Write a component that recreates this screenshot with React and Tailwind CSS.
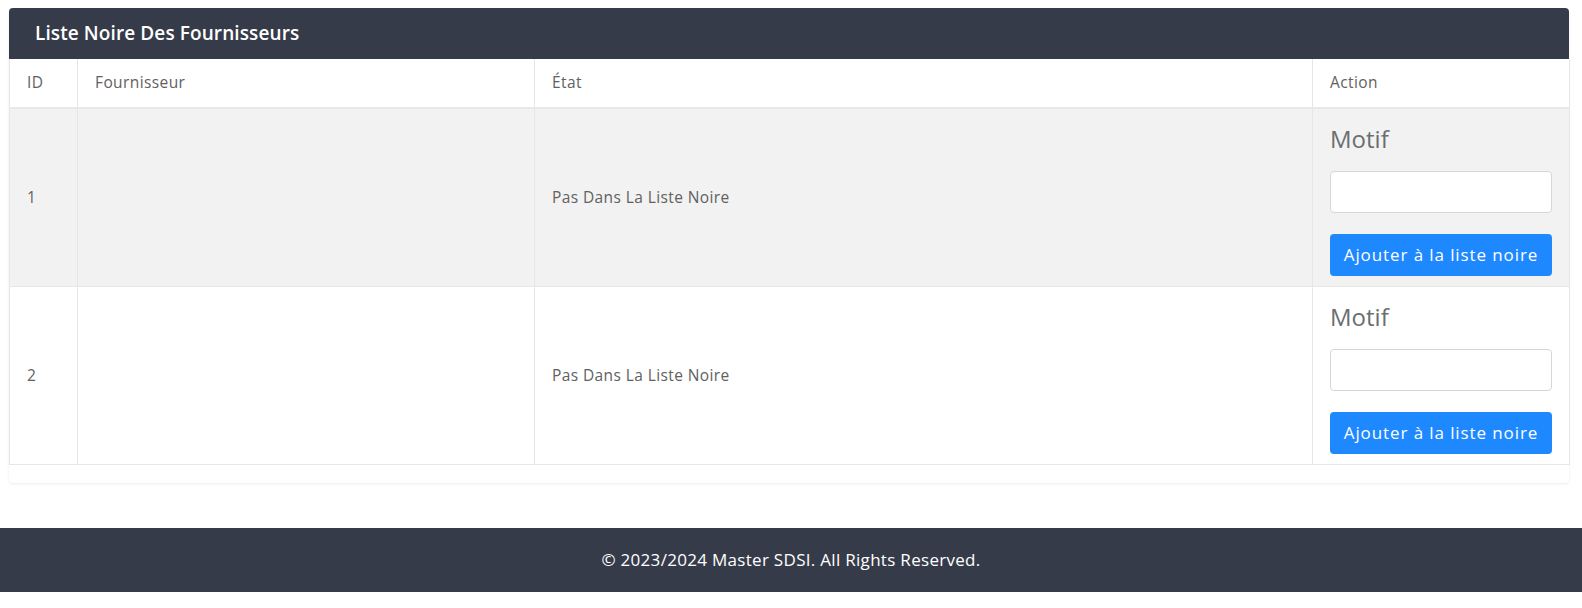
import React from "react";

const rows = [
  { id: 1, fournisseur: "", etat: "Pas Dans La Liste Noire", striped: true },
  { id: 2, fournisseur: "", etat: "Pas Dans La Liste Noire", striped: false },
];

export default function App() {
  return (
    <div
      className="min-h-[608px] bg-white flex flex-col"
      style={{ fontFamily: "'Open Sans', 'Noto Sans', sans-serif" }}
    >
      <div className="pt-2 pl-[9px] pr-[13px]">
        <div className="rounded-[4px] bg-white shadow-[0_1px_3px_rgba(0,0,0,0.08)] pb-[18px]">
          <div className="h-[51px] bg-[#363b4a] rounded-t-[4px] flex items-center px-[26px]">
            <h2 className="text-white text-[19px] font-semibold tracking-[0.1px]">
              Liste Noire Des Fournisseurs
            </h2>
          </div>
          <table className="w-full table-fixed border-collapse text-[15.5px] tracking-[0.4px] text-[#616161]">
            <colgroup>
              <col className="w-[68px]" />
              <col className="w-[457px]" />
              <col className="w-[778px]" />
              <col className="w-[257px]" />
            </colgroup>
            <thead>
              <tr className="border-b-2 border-[#e8e8e8]">
                <th className="h-[49px] px-[17px] text-left font-normal border-x border-[#e6e6e6]">ID</th>
                <th className="h-[49px] px-[17px] text-left font-normal border-x border-[#e6e6e6]">Fournisseur</th>
                <th className="h-[49px] px-[17px] text-left font-normal border-x border-[#e6e6e6]">État</th>
                <th className="h-[49px] px-[17px] text-left font-normal border-x border-[#e6e6e6]">Action</th>
              </tr>
            </thead>
            <tbody>
              {rows.map((r) => (
                <tr
                  key={r.id}
                  className={`border-b border-[#e6e6e6] ${r.striped ? "bg-[#f2f2f2]" : "bg-white"}`}
                >
                  <td className="px-[17px] align-middle border-x border-[#e6e6e6]">{r.id}</td>
                  <td className="px-[17px] align-middle border-x border-[#e6e6e6]">{r.fournisseur}</td>
                  <td className="px-[17px] align-middle border-x border-[#e6e6e6]">{r.etat}</td>
                  <td className="px-[17px] pt-[12px] pb-[10px] align-top border-x border-[#e6e6e6]">
                    <label className="block text-[24px] leading-[36px] tracking-normal text-[#6b6e70]">Motif</label>
                    <input
                      type="text"
                      className="mt-[14px] block w-full h-[42px] rounded-[4px] border border-[#d3d6da] bg-white"
                    />
                    <button className="mt-[21px] block w-full h-[42px] rounded-[4px] bg-[#1e88ff] text-white text-[17px] tracking-[0.9px] font-medium">
                      Ajouter à la liste noire
                    </button>
                  </td>
                </tr>
              ))}
            </tbody>
          </table>
        </div>
      </div>
      <footer className="mt-[45px] h-[64px] bg-[#363b4a] flex items-center justify-center">
        <p className="text-white text-[17px] tracking-[0.3px] font-medium">
          © 2023/2024 Master SDSI. All Rights Reserved.
        </p>
      </footer>
    </div>
  );
}
